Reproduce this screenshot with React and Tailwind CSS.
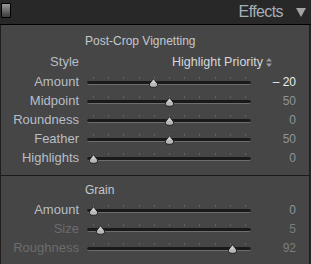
import React from "react";

const TICKS = [0, 1, 2, 3, 4, 5, 6, 7, 8, 9, 10];

const Thumb = () => (
  <svg width="11" height="10" viewBox="0 0 11 10" className="block">
    <path
      d="M5.5 0.6 L9.5 5.8 Q10.3 9.3 5.5 9.3 Q0.7 9.3 1.5 5.8 Z"
      fill="#b8b8b8"
      stroke="#222222"
      strokeWidth="1"
    />
    <path d="M5.5 1.8 L7.8 5 L3.2 5 Z" fill="#cecece" />
  </svg>
);

const Slider = ({ pct }) => (
  <div className="relative w-[164px] h-[19px]">
    {TICKS.map((t) => (
      <div
        key={t}
        className="absolute top-[5px] w-px h-[2px] bg-[#626262]"
        style={{ left: 6 + t * 15.2 }}
      />
    ))}
    <div className="absolute left-0 right-0 top-[9px] h-[4px] rounded-full bg-[#1a1a1a] border-b border-[#6e6e6e]" />
    <div
      className="absolute top-[6px]"
      style={{ left: 6 + pct * 1.52 - 5.5 }}
    >
      <Thumb />
    </div>
  </div>
);

const Row = ({ label, pct, value, dim, bright }) => (
  <div className="flex items-center h-[19px]">
    <div
      className={`w-[78px] text-right text-[13px] leading-none ${
        dim ? "text-[#6c6c6c]" : "text-[#b8bec6]"
      }`}
    >
      {label}
    </div>
    <div className="ml-[8px]">
      <Slider pct={pct} />
    </div>
    <div
      className={`w-[45px] text-right text-[12px] leading-none ${
        bright ? "text-[#ececec]" : dim ? "text-[#7c7c7c]" : "text-[#8e949c]"
      }`}
    >
      {value}
    </div>
  </div>
);

export default function App() {
  return (
    <div
      className="w-[311px] h-[264px] overflow-hidden bg-[#282828]"
      style={{ fontFamily: '"Liberation Sans", Arial, sans-serif' }}
    >
      <div className="h-[25px] flex items-center justify-between border-b border-black">
        <div className="ml-[1px] mt-[-3px] w-[10px] h-[15px] rounded-[1px] border border-black bg-gradient-to-b from-[#9a9a9a] via-[#6a6a6a] to-[#3a3a3a]" />
        <div className="flex items-center mr-[5px]">
          <span className="text-[16px] tracking-[-0.6px] text-[#a6aeb8]">Effects</span>
          <svg width="10" height="9" viewBox="0 0 10 9" className="ml-[13px]">
            <path d="M0 0 H10 L5 9 Z" fill="#a4a4a4" />
          </svg>
        </div>
      </div>
      <div className="h-[239px] bg-[#464646] border-l border-r border-[#1e1e1e] mr-[1px]">
        <div className="pt-[5px]">
          <div className="h-[22px] flex items-center pl-[84px] text-[12px] text-[#c4c8cc]">
            Post-Crop Vignetting
          </div>
          <div className="h-[20px] flex items-center">
            <div className="w-[78px] text-right text-[13px] text-[#b8bec6]">Style</div>
            <div className="ml-[93px] flex items-center text-[12.5px] text-[#d4d8dc]">
              Highlight Priority
              <svg width="6" height="9" viewBox="0 0 6 9" className="ml-[3px]">
                <path d="M3 0 L6 3.5 H0 Z M3 9 L6 5.5 H0 Z" fill="#9a9a9a" />
              </svg>
            </div>
          </div>
          <Row label="Amount" pct={40} value="– 20" bright />
          <Row label="Midpoint" pct={50} value="50" />
          <Row label="Roundness" pct={50} value="0" />
          <Row label="Feather" pct={50} value="50" />
          <Row label="Highlights" pct={0} value="0" />
        </div>
        <div className="mt-[8px] border-t border-[#1a1a1a]" />
        <div className="h-[24px] flex items-center pl-[84px] pt-[3px] text-[12px] text-[#c4c8cc]">
          Grain
        </div>
        <Row label="Amount" pct={0} value="0" />
        <Row label="Size" pct={5} value="5" dim />
        <Row label="Roughness" pct={92} value="92" dim />
      </div>
    </div>
  );
}
